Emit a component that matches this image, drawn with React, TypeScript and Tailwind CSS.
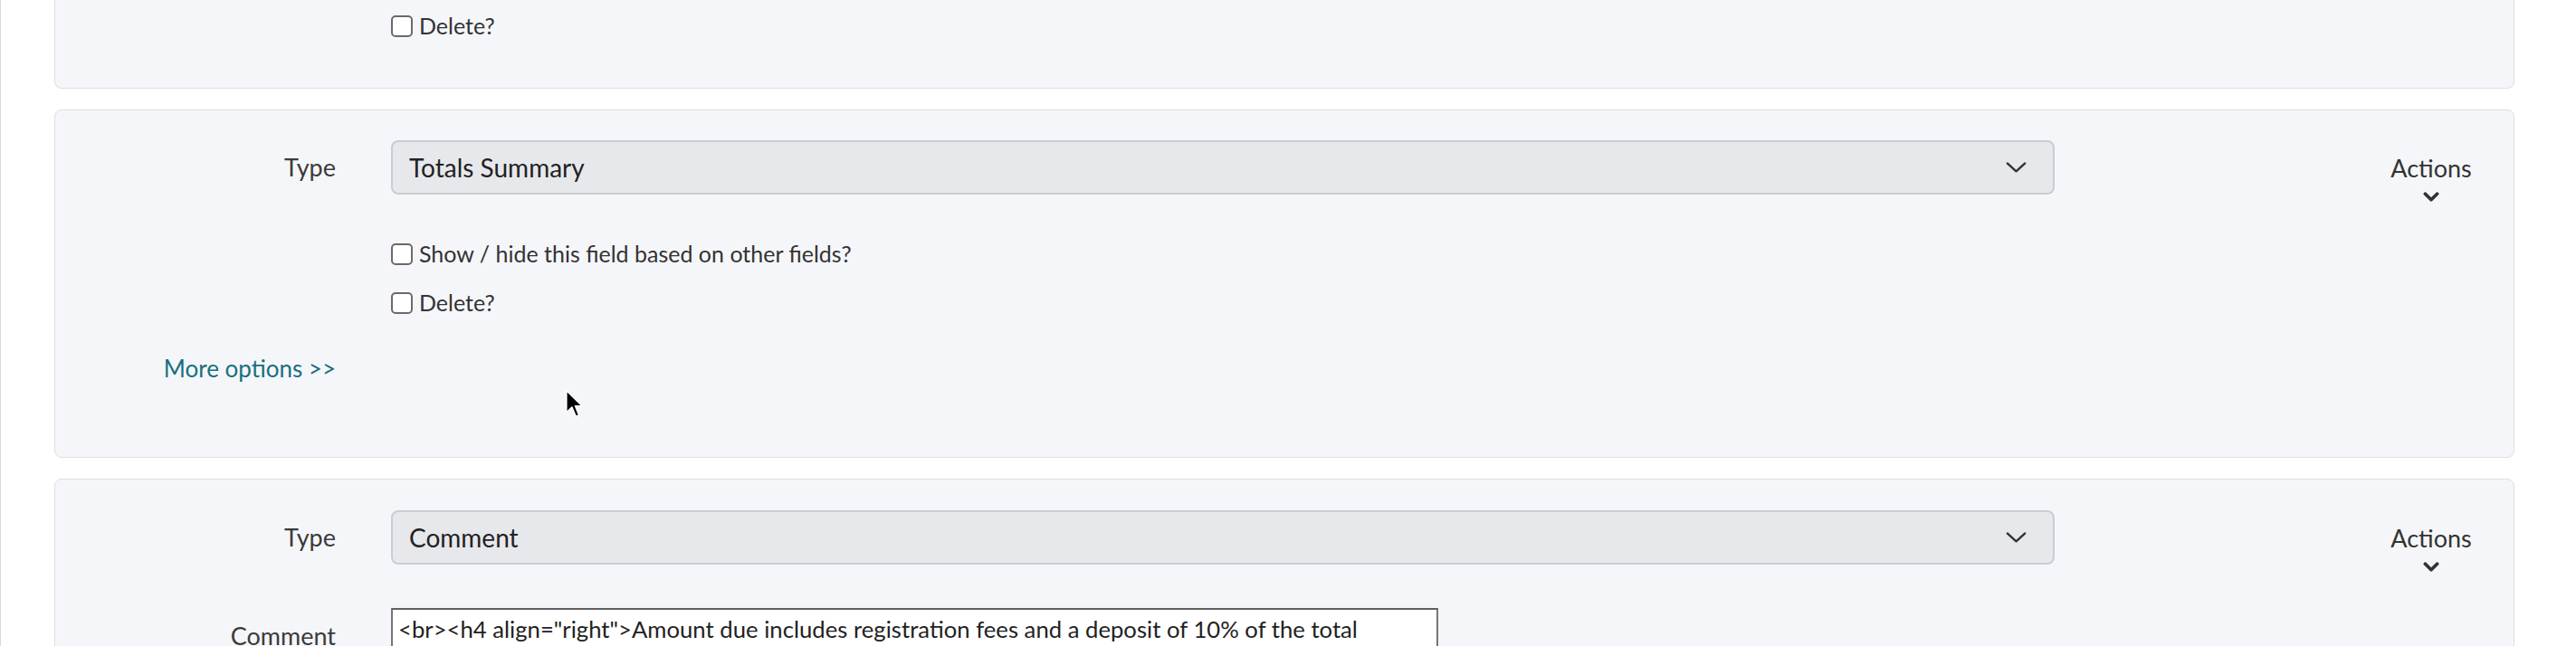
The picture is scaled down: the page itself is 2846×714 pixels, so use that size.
import React from 'react'

const Chevron = ({ className }: { className?: string }) => (
  <svg viewBox="0 0 24 12" className={className} fill="none" stroke="currentColor" strokeWidth={2.6} strokeLinecap="round" strokeLinejoin="round">
    <path d="M2 1.5 L12 10.5 L22 1.5" />
  </svg>
)

const ActionsToggle = () => (
  <div className="ml-auto mr-[46px] w-[90px] pt-[16px] flex flex-col items-center text-[27px] text-[#333]">
    <span className="leading-[30px]">Actions</span>
    <svg viewBox="0 0 16 10" className="w-[18px] h-[11px] mt-[11px] shrink-0" fill="none" stroke="currentColor" strokeWidth={3.4} strokeLinecap="round" strokeLinejoin="round">
      <path d="M2 2 L8 8 L14 2" />
    </svg>
  </div>
)

const TypeRow = ({ value }: { value: string }) => (
  <div className="flex items-start h-[60px]">
    <div className="w-[310px] h-[60px] flex items-center justify-end text-[27px] text-[#3b3b3b]">Type</div>
    <div className="ml-[61px] w-[1838px] h-[60px] flex items-center justify-between pl-[18px] pr-[29px] bg-[#e7e8ec] border-2 border-[#c9cdd2] rounded-[8px] text-[28px] text-[#222]">
      <span>{value}</span>
      <Chevron className="w-[23px] h-[12px] text-[#333]" />
    </div>
    <ActionsToggle />
  </div>
)

const CheckRow = ({ label }: { label: string }) => (
  <label className="h-[54px] pl-[371px] flex items-center gap-[7px] text-[#333]">
    <input type="checkbox" className="appearance-none w-[24px] h-[24px] border-2 border-[#6a6a6a] rounded-[5px] bg-white" />
    <span>{label}</span>
  </label>
)

export default function App() {
  return (
    <div className="relative h-[714px] overflow-hidden bg-white border-l border-[#d9d9d9] text-[25px] font-['Lato','Noto_Sans',sans-serif]">
      <div className="pl-[59px] pr-[68px] flex flex-col gap-[23px]">
        {/* card scrolled past the top */}
        <div className="bg-[#f5f6f9] border border-t-0 border-[#dcdee2] rounded-b-[8px] pt-[2px] pb-[41px]">
          <CheckRow label="Delete?" />
        </div>

        <div className="bg-[#f5f6f9] border border-[#dcdee2] rounded-[8px] pt-[33px] pb-[71px]">
          <TypeRow value="Totals Summary" />
          <div className="mt-[39px]">
            <CheckRow label="Show / hide this field based on other fields?" />
            <CheckRow label="Delete?" />
          </div>
          <div className="mt-[18px] h-[54px] w-[310px] flex items-center justify-end">
            <a href="#" className="text-[26px] text-[#17707f]">More options &gt;&gt;</a>
          </div>
        </div>

        <div className="bg-[#f5f6f9] border border-[#dcdee2] rounded-[8px] pt-[34px] pb-[40px]">
          <TypeRow value="Comment" />
          <div className="mt-[48px] flex items-start">
            <div className="w-[310px] pt-[16px] text-right leading-[30px] text-[27px] text-[#3b3b3b]">Comment</div>
            <textarea
              readOnly
              className="ml-[61px] w-[1157px] h-[150px] bg-white border-2 border-[#767676] border-t-[#5f5f5f] pt-[6px] px-[6px] leading-[30px] text-[25.7px] text-[#222] resize-none outline-none"
              value={'<br><h4 align="right">Amount due includes registration fees and a deposit of 10% of the total\namount.</h4>'}
            />
          </div>
        </div>
      </div>

      {/* mouse pointer */}
      <svg viewBox="0 0 12 19" className="absolute left-[623px] top-[430px] w-[21px] h-[33px]">
        <path d="M1 1 L1 15 L4.5 11.5 L7 17.5 L9 16.6 L6.6 10.8 L11 10.8 Z" fill="#000" stroke="#fff" strokeWidth={0.9} strokeLinejoin="round" />
      </svg>
    </div>
  )
}
